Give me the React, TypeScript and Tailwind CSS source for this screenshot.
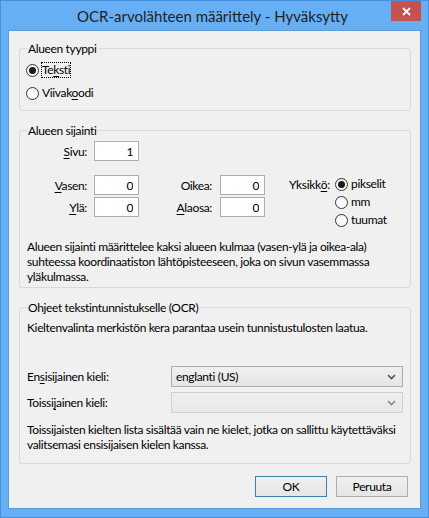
import React, { useState } from 'react';

// Alueen määrittely -dialogi (Windows 8 -tyylinen)

const Ul = ({ children }: { children: React.ReactNode }) => (
  <span className="underline underline-offset-[2px] decoration-[1px]">{children}</span>
);

const Radio = ({
  checked,
  focused,
  onClick,
  children,
}: {
  checked: boolean;
  focused?: boolean;
  onClick: () => void;
  children: React.ReactNode;
}) => (
  <div className="flex items-center gap-[2px] cursor-default" onClick={onClick}>
    <span className="w-[13px] h-[13px] rounded-full border border-[#333333] bg-gradient-to-b from-[#f4f4f4] to-[#ffffff] flex items-center justify-center shrink-0">
      {checked && <span className="w-[7px] h-[7px] rounded-full bg-[#1b1b1b]" />}
    </span>
    <span
      className={`border px-0 leading-[14px] ${
        focused ? 'border-dotted border-black' : 'border-transparent'
      }`}
    >
      {children}
    </span>
  </div>
);

const Group = ({
  title,
  className = '',
  children,
}: {
  title: string;
  className?: string;
  children: React.ReactNode;
}) => (
  <fieldset className={`border border-[#d9d9d9] rounded-[3px] px-[7px] ${className}`}>
    <legend className="px-[1px] leading-[15px]">{title}</legend>
    {children}
  </fieldset>
);

const NumBox = ({ value }: { value: string }) => (
  <input
    readOnly
    value={value}
    className="w-[45px] h-[20px] border border-[#abadb3] bg-white text-right pr-[5px] text-[12px] outline-none shrink-0"
  />
);

const Chevron = ({ color }: { color: string }) => (
  <svg width="9" height="6" viewBox="0 0 9 6">
    <path d="M1 1 L4.5 4.5 L8 1" fill="none" stroke={color} strokeWidth="1.6" />
  </svg>
);

const Combo = ({ value, disabled }: { value: string; disabled?: boolean }) => (
  <div
    className={`flex-1 h-[21px] border flex items-center pl-[4px] pr-[6px] ${
      disabled
        ? 'border-[#cfcfcf] bg-gradient-to-b from-[#efefef] to-[#e8e8e8]'
        : 'border-[#acacac] bg-gradient-to-b from-[#f0f0f0] to-[#e5e5e5]'
    }`}
  >
    <span className="flex-1">{value}</span>
    <Chevron color={disabled ? '#8a8a8a' : '#555555'} />
  </div>
);

const Button = ({ label, isDefault }: { label: string; isDefault?: boolean }) => (
  <button
    className={`w-[72px] h-[21px] border bg-gradient-to-b from-[#f0f0f0] to-[#e5e5e5] text-[12px] leading-[15px] ${
      isDefault ? 'border-[#3c7fb1]' : 'border-[#acacac]'
    }`}
  >
    {label}
  </button>
);

export default function App() {
  const [areaType, setAreaType] = useState('text');
  const [unit, setUnit] = useState('px');

  return (
    <div className="w-[429px] h-[518px] border border-[#4490dc] bg-[#66aff5] flex flex-col font-['Lato','Liberation_Sans',sans-serif] text-[12px] leading-[15px] text-black select-none">
      {/* otsikkorivi */}
      <div className="h-[29px] relative flex items-center justify-center shrink-0">
        <span className="text-[15px] text-[#1f1f1f] pt-[1px] -ml-[4px]">OCR-arvolähteen määrittely - Hyväksytty</span>
        <div className="absolute top-0 right-[7px] w-[30px] h-[20px] bg-[#c75050] flex items-center justify-center">
          <svg width="9" height="9" viewBox="0 0 9 9">
            <path d="M1 1 L8 8 M8 1 L1 8" stroke="white" strokeWidth="1.8" />
          </svg>
        </div>
      </div>

      {/* sisältö */}
      <div className="flex-1 mx-[7px] mb-[8px] border border-[#5b9bd8] bg-[#f0f0f0] pt-[10px] pl-[10px] pr-[9px] flex flex-col tracking-[-0.35px] whitespace-nowrap">
        <Group title="Alueen tyyppi" className="pb-[9px]">
          <div className="mt-[6px] h-[16px] -ml-[1px] flex items-center">
            <Radio checked={areaType === 'text'} focused onClick={() => setAreaType('text')}>
              Te<Ul>k</Ul>sti
            </Radio>
          </div>
          <div className="mt-[7px] h-[16px] -ml-[1px] flex items-center">
            <Radio checked={areaType === 'barcode'} onClick={() => setAreaType('barcode')}>
              Viivak<Ul>o</Ul>odi
            </Radio>
          </div>
        </Group>

        <Group title="Alueen sijainti" className="mt-[12px] pb-[3px]">
          <div className="mt-[3px] flex items-center -ml-[1px]">
            <span className="w-[61px] text-right mr-[7px]">
              <Ul>S</Ul>ivu:
            </span>
            <NumBox value="1" />
          </div>

          <div className="mt-[14px] flex -ml-[1px]">
            <div className="flex flex-col gap-[2px]">
              <div className="flex items-center">
                <span className="w-[61px] text-right mr-[7px]">
                  <Ul>V</Ul>asen:
                </span>
                <NumBox value="0" />
                <span className="w-[73px] text-right mr-[8px]">Oikea:</span>
                <NumBox value="0" />
              </div>
              <div className="flex items-center">
                <span className="w-[61px] text-right mr-[7px]">
                  <Ul>Y</Ul>lä:
                </span>
                <NumBox value="0" />
                <span className="w-[73px] text-right mr-[8px]">
                  <Ul>A</Ul>laosa:
                </span>
                <NumBox value="0" />
              </div>
            </div>

            <div className="ml-[24px] flex">
              <span className="w-[46px] h-[18px] flex items-center">
                Yksikk<Ul>ö</Ul>:
              </span>
              <div className="flex flex-col">
                <div className="h-[18px] flex items-center">
                  <Radio checked={unit === 'px'} onClick={() => setUnit('px')}>pikselit</Radio>
                </div>
                <div className="h-[18px] flex items-center">
                  <Radio checked={unit === 'mm'} onClick={() => setUnit('mm')}>mm</Radio>
                </div>
                <div className="h-[18px] flex items-center">
                  <Radio checked={unit === 'in'} onClick={() => setUnit('in')}>tuumat</Radio>
                </div>
              </div>
            </div>
          </div>

          <p className="mt-[10px]">
            Alueen sijainti määrittelee kaksi alueen kulmaa (vasen-ylä ja oikea-ala)
            <br />
            suhteessa koordinaatiston lähtöpisteeseen, joka on sivun vasemmassa
            <br />
            yläkulmassa.
          </p>
        </Group>

        <Group title="Ohjeet tekstintunnistukselle (OCR)" className="mt-[12px] pb-[11px]">
          <p className="mt-[5px]">Kieltenvalinta merkistön kera parantaa usein tunnistustulosten laatua.</p>

          <div className="mt-[31px] flex items-center">
            <span className="w-[144px]">
              En<Ul>s</Ul>isijainen kieli:
            </span>
            <Combo value="englanti (US)" />
          </div>
          <div className="mt-[5px] flex items-center">
            <span className="w-[144px]">
              Toissi<Ul>j</Ul>ainen kieli:
            </span>
            <Combo value="" disabled />
          </div>

          <p className="mt-[9px]">
            Toissijaisten kielten lista sisältää vain ne kielet, jotka on sallittu käytettäväksi
            <br />
            valitsemasi ensisijaisen kielen kanssa.
          </p>
        </Group>

        <div className="mt-[12px] flex justify-end gap-[9px] pr-[3px]">
          <Button label="OK" isDefault />
          <Button label="Peruuta" />
        </div>
      </div>
    </div>
  );
}
